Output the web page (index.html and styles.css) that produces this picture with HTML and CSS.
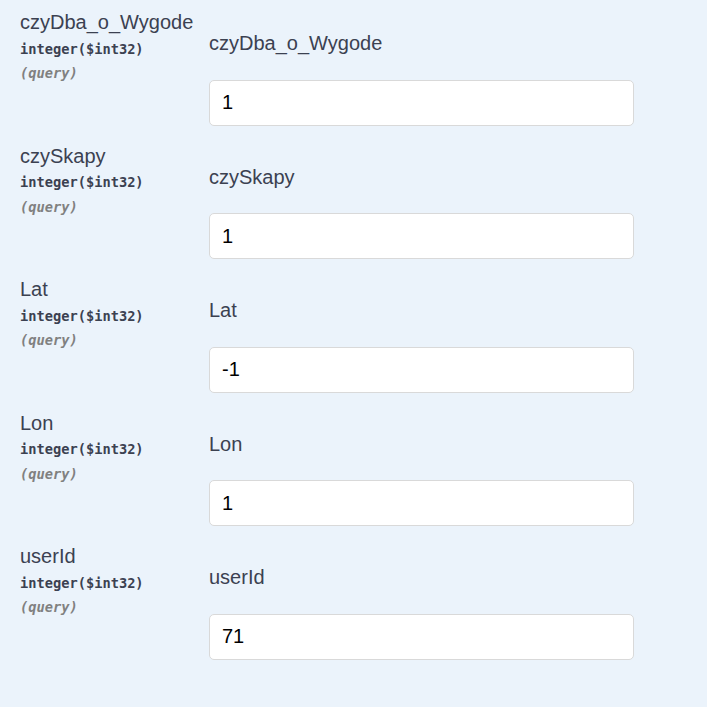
FILE: index.html
```html
<!DOCTYPE html>
<html lang="pl">
<head>
<meta charset="utf-8">
<title>Parameters</title>
<link rel="stylesheet" href="styles.css">
</head>
<body>
<div class="params">
  <div class="row">
    <div class="col-name">
      <div class="p-name">czyDba_o_Wygode</div>
      <div class="p-type">integer<span class="p-fmt">($int32)</span></div>
      <div class="p-in">(query)</div>
    </div>
    <div class="col-desc">
      <div class="p-label">czyDba_o_Wygode</div>
      <input class="p-input" type="text" value="1">
    </div>
  </div>
  <div class="row">
    <div class="col-name">
      <div class="p-name">czySkapy</div>
      <div class="p-type">integer<span class="p-fmt">($int32)</span></div>
      <div class="p-in">(query)</div>
    </div>
    <div class="col-desc">
      <div class="p-label">czySkapy</div>
      <input class="p-input" type="text" value="1">
    </div>
  </div>
  <div class="row">
    <div class="col-name">
      <div class="p-name">Lat</div>
      <div class="p-type">integer<span class="p-fmt">($int32)</span></div>
      <div class="p-in">(query)</div>
    </div>
    <div class="col-desc">
      <div class="p-label">Lat</div>
      <input class="p-input" type="text" value="-1">
    </div>
  </div>
  <div class="row">
    <div class="col-name">
      <div class="p-name">Lon</div>
      <div class="p-type">integer<span class="p-fmt">($int32)</span></div>
      <div class="p-in">(query)</div>
    </div>
    <div class="col-desc">
      <div class="p-label">Lon</div>
      <input class="p-input" type="text" value="1">
    </div>
  </div>
  <div class="row">
    <div class="col-name">
      <div class="p-name">userId</div>
      <div class="p-type">integer<span class="p-fmt">($int32)</span></div>
      <div class="p-in">(query)</div>
    </div>
    <div class="col-desc">
      <div class="p-label">userId</div>
      <input class="p-input" type="text" value="71">
    </div>
  </div>
</div>
</body>
</html>
```
FILE: styles.css
```css
html, body {
  margin: 0;
  padding: 0;
  background: #ebf3fb;
  height: 100%;
}
body {
  font-family: "Liberation Sans", Arial, sans-serif;
  color: #3b4151;
}
.params {
  display: flex;
  flex-direction: column;
}
.row {
  display: flex;
  height: 133.5px;
  box-sizing: border-box;
  padding-top: 11px;
}
.col-name {
  width: 189px;
  padding-left: 20px;
  display: flex;
  flex-direction: column;
}
.p-name {
  font-size: 20px;
  line-height: 23px;
  white-space: nowrap;
}
.p-type {
  font-family: "DejaVu Sans Mono", monospace;
  font-size: 13.7px;
  font-weight: 700;
  line-height: 24.5px;
  margin-top: 2.6px;
  white-space: nowrap;
}
.p-in {
  font-family: "DejaVu Sans Mono", monospace;
  font-size: 13.7px;
  font-style: italic;
  font-weight: 700;
  color: #808080;
  line-height: 24.5px;
}
.col-desc {
  display: flex;
  flex-direction: column;
  padding-top: 21.3px;
}
.p-label {
  font-size: 20px;
  line-height: 23px;
  margin-bottom: 24.7px;
}
.p-input {
  box-sizing: border-box;
  width: 425px;
  height: 46px;
  margin: 0;
  padding: 0 12px;
  border: 1px solid #d9d9d9;
  border-radius: 5px;
  background: #fff;
  font-family: "Liberation Sans", Arial, sans-serif;
  font-size: 20px;
  color: #000;
  outline: none;
}
```
